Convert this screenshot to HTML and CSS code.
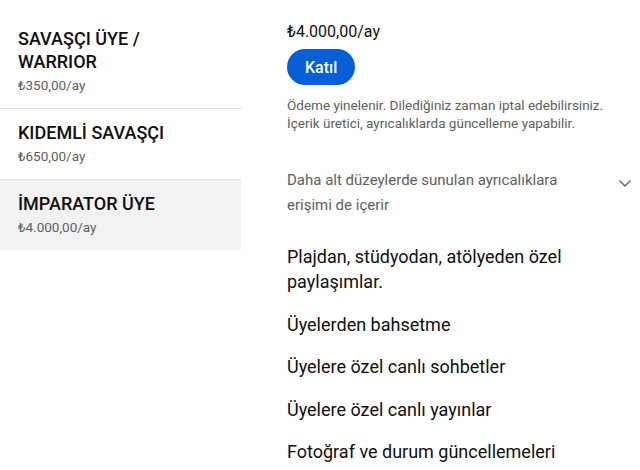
FILE: index.html
```html
<!DOCTYPE html>
<html>
<head>
    <meta charset="UTF-8">
    <title>Kanal üyeliği</title>
    <link rel="stylesheet" href="styles.css">
</head>
<body>
<div class="layout">
    <div class="tiers">
        <div class="tier">
            <div class="tier-name">SAVAŞÇI ÜYE / WARRIOR</div>
            <div class="tier-price">₺350,00/ay</div>
        </div>
        <div class="tier">
            <div class="tier-name">KIDEMLİ SAVAŞÇI</div>
            <div class="tier-price">₺650,00/ay</div>
        </div>
        <div class="tier selected">
            <div class="tier-name">İMPARATOR ÜYE</div>
            <div class="tier-price">₺4.000,00/ay</div>
        </div>
    </div>

    <div class="details">
        <div class="price">₺4.000,00/ay</div>
        <button type="button" class="join">Katıl</button>
        <p class="note">Ödeme yinelenir. Dilediğiniz zaman iptal edebilirsiniz.<br>İçerik üretici, ayrıcalıklarda güncelleme yapabilir.</p>

        <div class="includes">
            <span class="includes-text">Daha alt düzeylerde sunulan ayrıcalıklara erişimi de içerir</span>
            <svg class="chevron" viewBox="0 0 24 24" width="24" height="24">
                <path d="M6.5 9.5 12 15l5.5-5.5" fill="none" stroke="#606060" stroke-width="1.4"/>
            </svg>
        </div>

        <ul class="perks">
            <li>Plajdan, stüdyodan, atölyeden özel paylaşımlar.</li>
            <li>Üyelerden bahsetme</li>
            <li>Üyelere özel canlı sohbetler</li>
            <li>Üyelere özel canlı yayınlar</li>
            <li>Fotoğraf ve durum güncellemeleri</li>
        </ul>
    </div>
</div>
</body>
</html>
```

FILE: styles.css
```css
body {
    margin: 0;
    font-family: Roboto, "Noto Sans", Arial, sans-serif;
    color: #0f0f0f;
    background: #fff;
}

.layout {
    display: flex;
    align-items: flex-start;
}

.tiers {
    width: 241px;
    flex-shrink: 0;
    padding-top: 15px;
}

.tier {
    padding: 12px 18px 14px;
    border-bottom: 1px solid #e0e0e0;
}

.tier.selected {
    background-color: #f2f2f2;
    border-bottom: none;
    padding-bottom: 14px;
}

.tier-name {
    font-size: 18px;
    font-weight: 500;
    line-height: 23px;
    padding-right: 40px;
}

.tier-price {
    font-size: 13.5px;
    line-height: 18px;
    color: #606060;
    margin-top: 3px;
}

.details {
    flex: 1;
    padding: 22px 3px 0 46px;
}

.price {
    font-size: 16px;
    line-height: 20px;
}

.join {
    display: block;
    margin-top: 7px;
    height: 36px;
    padding: 0 18px;
    border: none;
    border-radius: 18px;
    background-color: #065fd4;
    color: #fff;
    font-family: inherit;
    font-size: 16px;
    font-weight: 500;
    cursor: pointer;
}

.note {
    margin: 11px 0 0;
    font-size: 13.5px;
    line-height: 18px;
    color: #606060;
}

.includes {
    display: flex;
    justify-content: space-between;
    align-items: flex-start;
    margin-top: 36px;
}

.includes-text {
    max-width: 300px;
    font-size: 15px;
    line-height: 25px;
    color: #606060;
}

.chevron {
    flex-shrink: 0;
    margin-top: 3px;
}

.perks {
    list-style: none;
    margin: 26px 0 0;
    padding: 0;
}

.perks li {
    font-size: 18px;
    line-height: 25px;
    margin-bottom: 17.5px;
    max-width: 310px;
}
```
